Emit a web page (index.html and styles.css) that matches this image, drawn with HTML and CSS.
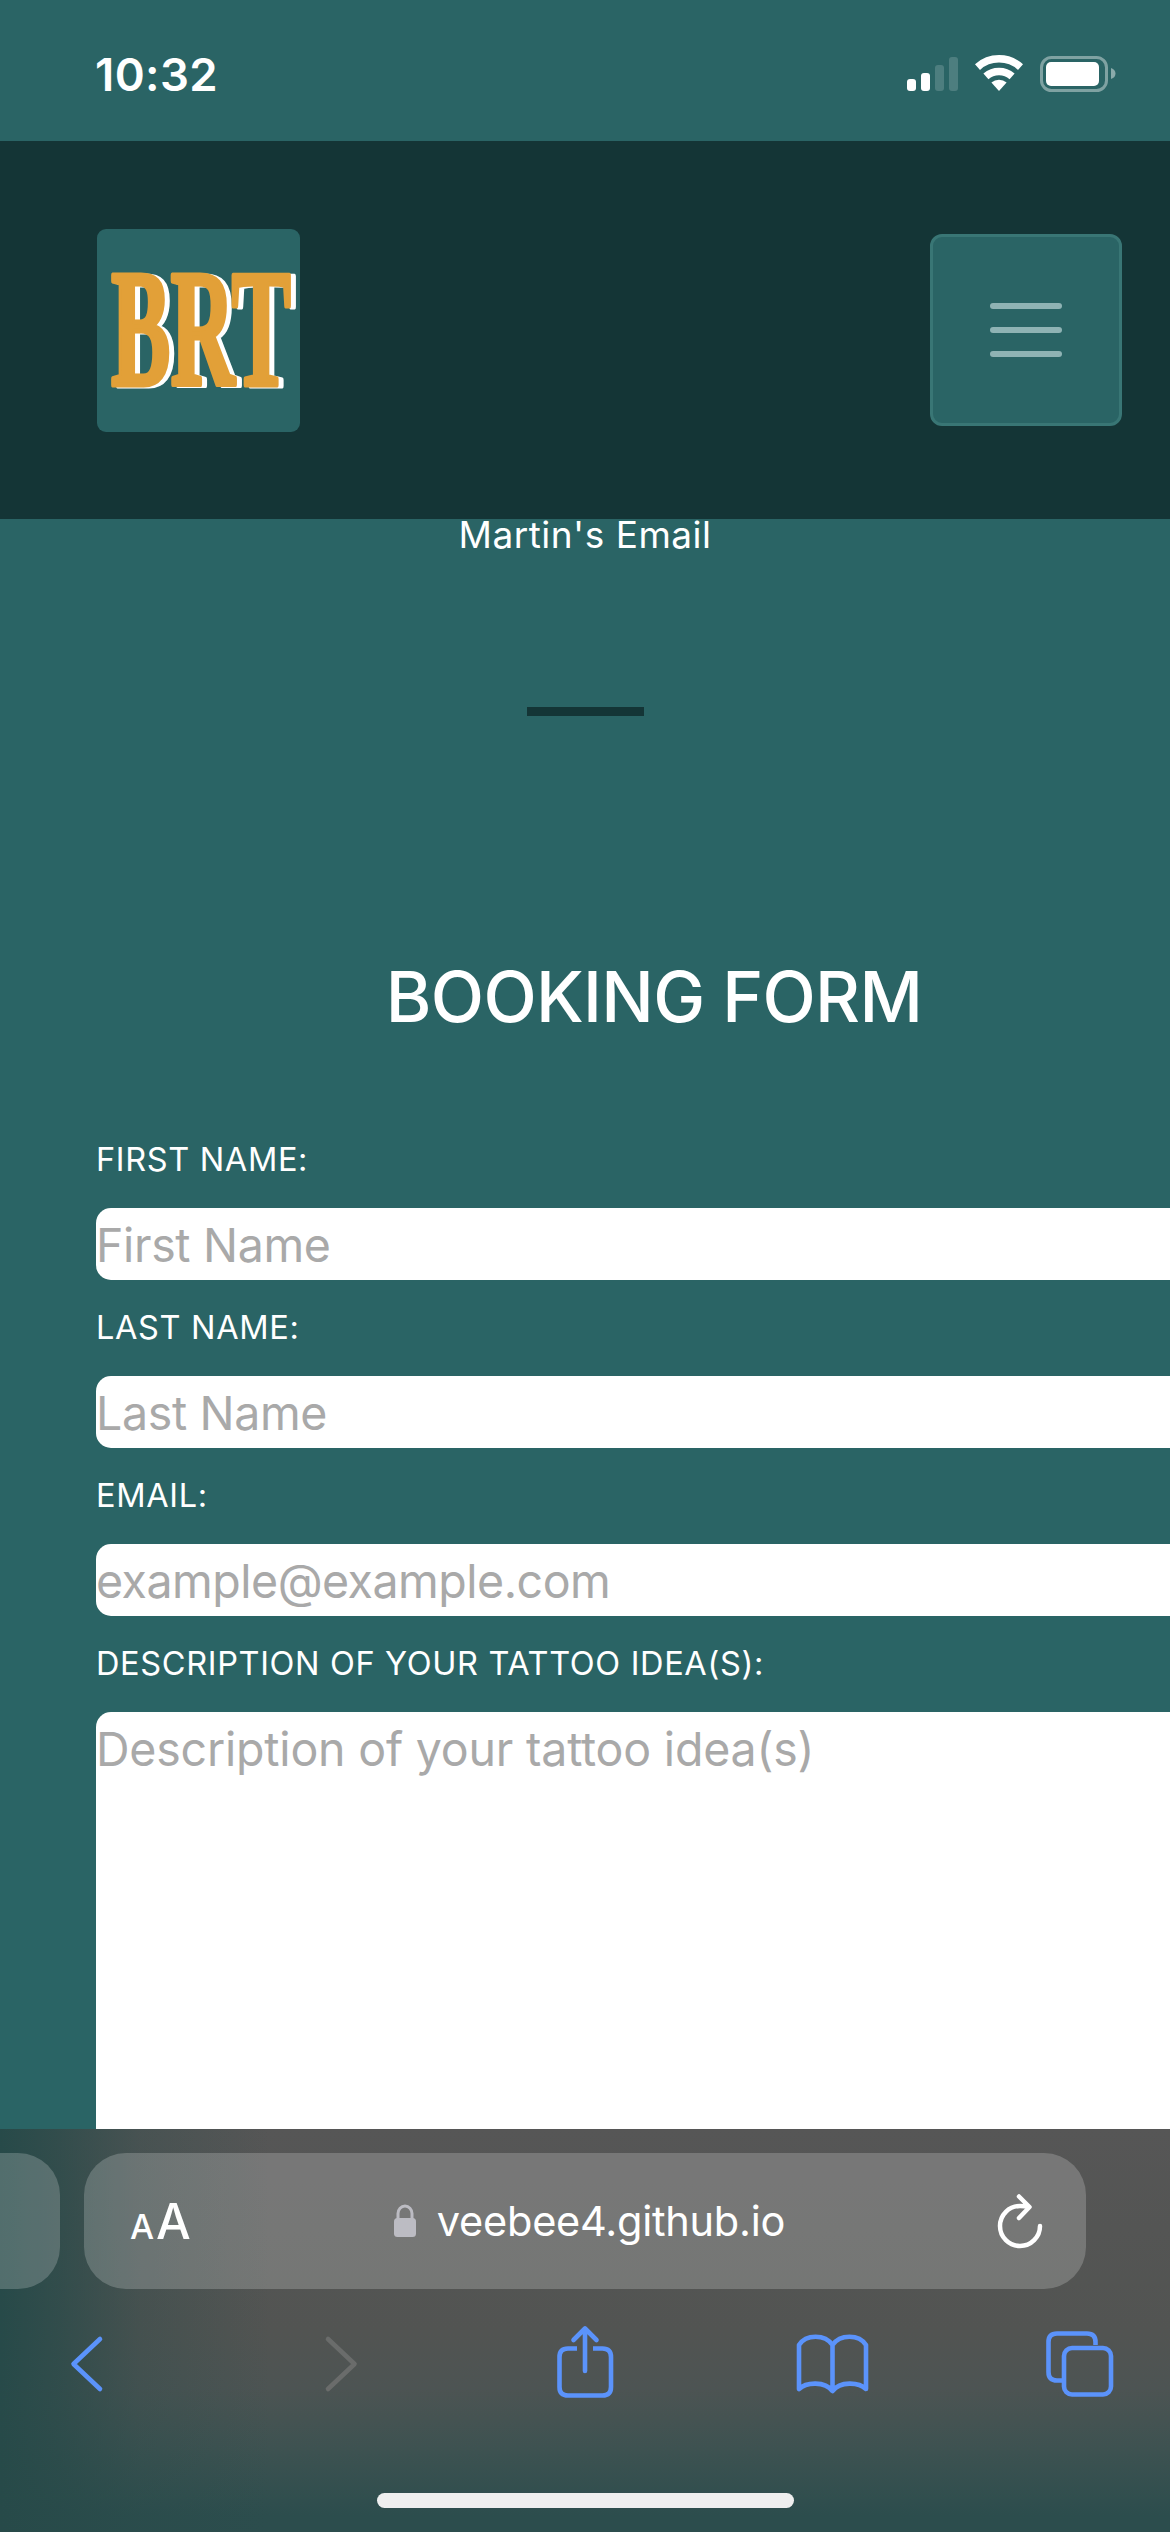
FILE: index.html
```html
<!DOCTYPE html>
<html lang="en">
<head>
<meta charset="utf-8">
<title>BRT</title>
<link rel="stylesheet" href="styles.css">
</head>
<body>
<div class="status">
  <span class="time">10:32</span>
  <svg class="signals" width="210" height="38" viewBox="0 0 210 38">
    <g fill="#fff">
      <rect x="0" y="24" width="9" height="12" rx="3"/>
      <rect x="14" y="18" width="9" height="18" rx="3"/>
      <rect x="28" y="10" width="9" height="26" rx="3" opacity=".17"/>
      <rect x="42" y="2" width="9" height="34" rx="3" opacity=".17"/>
      <path d="M92 36 84.400 27.600A11.300 11.300 0 0 1 99.600 27.600Z"/>
      <rect x="139" y="7" width="53" height="24" rx="5"/>
      <path d="M204 13q4.500 1.500 4.500 5.500t-4.500 5.500z" opacity=".45"/>
    </g>
    <g fill="none" stroke="#fff" stroke-width="7.500">
      <path d="M70.500 12.100A32.200 32.200 0 0 1 113.500 12.100"/>
      <path d="M78.900 21.400A19.600 19.600 0 0 1 105.100 21.400"/>
      <rect x="134.500" y="2.500" width="65" height="33" rx="10" stroke-width="3" opacity=".4"/>
    </g>
  </svg>
</div>
<header class="navbar">
  <div class="logo">
    <svg width="203" height="203" viewBox="0 0 203 203">
      <text class="mark" x="14" y="156" textLength="180" lengthAdjust="spacingAndGlyphs">BRT</text>
    </svg>
  </div>
  <button class="menu" aria-label="Menu"><i></i><i></i><i></i></button>
</header>
<main class="page">
  <p class="email">Martin's Email</p>
  <hr class="rule">
  <form class="booking">
    <h1>BOOKING FORM</h1>
    <label for="first">FIRST NAME:</label>
    <input id="first" type="text" placeholder="First Name">
    <label for="last">LAST NAME:</label>
    <input id="last" type="text" placeholder="Last Name">
    <label for="mail">EMAIL:</label>
    <input id="mail" type="text" placeholder="example@example.com">
    <label for="idea">DESCRIPTION OF YOUR TATTOO IDEA(S):</label>
    <textarea id="idea" placeholder="Description of your tattoo idea(s)"></textarea>
  </form>
</main>
<footer class="chrome">
  <div class="tabs">
    <div class="previous"></div>
    <div class="address">
      <span class="sizes"><span class="small">A</span><span class="large">A</span></span>
      <span class="host">
        <svg width="24" height="34" viewBox="0 0 24 34"><rect x="1" y="14" width="22" height="19" rx="3.500" fill="#bcbcc3"/><path d="M5 15V9.500a7 7.500 0 0 1 14 0V15" fill="none" stroke="#bcbcc3" stroke-width="3"/></svg>
        <span class="domain">veebee4.github.io</span>
      </span>
      <svg class="reload" width="48" height="58" viewBox="996 2190 48 58" fill="none" stroke="#fff" stroke-width="4.500" stroke-linecap="round" stroke-linejoin="round"><path d="M1040 2224a20 20 0 1 1-20-20q5 0 9 1M1019 2194.500l10.500 10.500-10.500 11"/></svg>
    </div>
  </div>
  <svg class="tools" width="1170" height="90" viewBox="0 2320 1170 90" fill="none" stroke="#5b93fb" stroke-width="4.600" stroke-linecap="round" stroke-linejoin="round">
    <path d="M100 2339 73.500 2364 100 2389"/>
    <path d="M328 2339 354.500 2364 328 2389" stroke="#6a6c6b"/>
    <path d="M577 2348.500H568q-8.500 0-8.500 8.500V2387q0 8.500 8.500 8.500H602.500q8.500 0 8.500-8.500V2357q0-8.500-8.500-8.500H593" stroke-linecap="butt"/>
    <path d="M585 2371V2329M573.500 2340 585 2328.500 596.500 2340"/>
    <path d="M799 2345C806 2334 825 2334 832.500 2345C840 2334 859 2334 866 2345V2389C859 2382 840 2381 832.500 2391C825 2381 806 2382 799 2389ZM832.500 2345V2390"/>
    <path d="M1062 2380.500H1057q-8.500 0-8.500-8.500V2342q0-8.500 8.500-8.500H1087q8.500 0 8.500 8.500V2345" stroke-linecap="butt"/>
    <rect x="1064" y="2348" width="47" height="46.500" rx="8"/>
  </svg>
  <div class="home"></div>
</footer>
</body>
</html>
```
FILE: styles.css
```css
* { box-sizing: border-box; margin: 0; }
body {
  display: flex;
  flex-direction: column;
  height: 2532px;
  overflow: hidden;
  background: #2a6465;
  color: #fff;
  font-family: Inter, "Liberation Sans", sans-serif;
}
.status {
  display: flex;
  justify-content: space-between;
  height: 141px;
  padding: 55px 53px 0 95px;
}
.time { font-size: 45.5px; font-weight: 600; line-height: 39px; letter-spacing: .4px; }
.navbar {
  display: flex;
  justify-content: space-between;
  align-items: center;
  height: 378px;
  padding: 0 48px 0 97px;
  background: #143536;
}
.logo {
  width: 203px;
  height: 203px;
  border-radius: 9px;
  background: #2a6465;
}
.logo svg { display: block; overflow: visible; }
.mark {
  font: 700 168px "Liberation Serif", serif;
  fill: #e2a038;
  stroke: #e2a038;
  stroke-width: 5px;
  stroke-linejoin: round;
  filter: drop-shadow(5px 1px 0 #fff);
}
.menu {
  display: flex;
  flex-direction: column;
  justify-content: center;
  align-items: center;
  gap: 18px;
  width: 192px;
  height: 192px;
  border: 3px solid #397675;
  border-radius: 12px;
  background: #2a6465;
}
.menu i { width: 72px; height: 6px; border-radius: 3px; background: #8fb3b4; }
.page { height: 1610px; }
.email { font-size: 37px; line-height: 31px; letter-spacing: .5px; text-align: center; }
.rule { width: 117px; height: 9px; margin: 157px auto 0; border: 0; background: #143536; }
.booking {
  display: flex;
  flex-direction: column;
  width: 1116px;
  margin: 239px 0 0 96px;
}
h1 {
  margin-bottom: 101px;
  font-size: 69.5px;
  font-weight: 500;
  line-height: 84px;
  letter-spacing: -.7px;
  text-align: center;
}
label { font-size: 32.5px; line-height: 40px; letter-spacing: .65px; }
input, textarea {
  height: 72px;
  margin: 28px 0;
  padding: 2px 0 0;
  border: 0;
  border-radius: 15px;
  background: #fff;
  font: 46.5px Inter, sans-serif;
  letter-spacing: -.35px;
}
#mail { letter-spacing: -.5px; }
textarea { height: 417px; margin-bottom: 0; padding-top: 9px; border-radius: 15px 0 0 0; letter-spacing: -.2px; resize: none; }
::placeholder { color: #a9a9a9; opacity: 1; }
.chrome {
  height: 403px;
  padding-top: 24px;
  background:
    linear-gradient(90deg, #274a49 0, rgba(39,74,73,.75) 60px, rgba(39,74,73,.3) 140px, rgba(39,74,73,0) 270px),
    linear-gradient(#565656 0, #525452 50%, #4d5453 64%, #3d5251 80%, #2c4d4d 96%);
}
.tabs { display: flex; gap: 24px; height: 136px; }
.previous { width: 60px; border-radius: 0 42px 42px 0; background: rgba(255,255,255,.2); }
.address {
  display: flex;
  align-items: center;
  justify-content: space-between;
  width: 1002px;
  padding: 0 42px 0 46px;
  border-radius: 42px;
  background: rgba(255,255,255,.2);
}
.sizes { display: flex; align-items: baseline; gap: 2px; width: 52px; font-weight: 500; }
.small { font-size: 34px; }
.large { font-size: 49px; }
.host { display: flex; align-items: center; gap: 20px; }
.domain { font-size: 41.5px; letter-spacing: -.25px; }
.tools { display: block; margin-top: 31px; }
.home { width: 417px; height: 15px; margin: 83px auto 0; border-radius: 8px; background: #efefef; }
```
